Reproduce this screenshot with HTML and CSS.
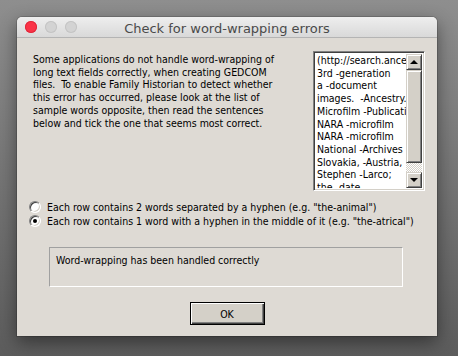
FILE: index.html
```html
<!DOCTYPE html>
<html lang="en">
<head>
  <meta charset="UTF-8">
  <title>Check for word-wrapping errors</title>
  <link rel="stylesheet" href="styles.css">
</head>
<body>
  <div class="window">
    <div class="titlebar">
      <div class="lights">
        <span class="light close"></span>
        <span class="light"></span>
        <span class="light"></span>
      </div>
      <div class="title">Check for word-wrapping errors</div>
      <div></div>
    </div>
    <div class="content">
      <div class="top">
        <p class="intro">Some applications do not handle word-wrapping of<br>long text fields correctly, when creating GEDCOM<br>files.&nbsp; To enable Family Historian to detect whether<br>this error has occurred, please look at the list of<br>sample words opposite, then read the sentences<br>below and tick the one that seems most correct.</p>
        <div class="listbox">
          <ul class="items">
            <li>(http://search.ancestry</li>
            <li>3rd -generation</li>
            <li>a -document</li>
            <li>images.&nbsp; -Ancestry.</li>
            <li>Microfilm -Publication</li>
            <li>NARA -microfilm</li>
            <li>NARA -microfilm</li>
            <li>National -Archives</li>
            <li>Slovakia, -Austria,</li>
            <li>Stephen -Larco;</li>
            <li>the -date</li>
          </ul>
          <div class="scrollbar">
            <div class="sb-btn"><span class="arrow up"></span></div>
            <div class="sb-thumb"></div>
            <div class="sb-track"></div>
            <div class="sb-btn"><span class="arrow down"></span></div>
          </div>
        </div>
      </div>
      <div class="options">
        <label class="option"><span class="radio"></span>Each row contains 2 words separated by a hyphen (e.g. "the-animal")</label>
        <label class="option"><span class="radio checked"></span>Each row contains 1 word with a hyphen in the middle of it (e.g. "the-atrical")</label>
      </div>
      <div class="status">Word-wrapping has been handled correctly</div>
      <div class="actions">
        <button class="ok">OK</button>
      </div>
    </div>
  </div>
</body>
</html>
```

FILE: styles.css
```css
html, body { margin: 0; height: 100%; }
body { background: linear-gradient(#8e8e8e, #5c5c5c); padding: 17px; box-sizing: border-box; font-family: "DejaVu Sans Condensed", "DejaVu Sans", sans-serif; }

.window { width: 420px; height: 319px; background: #dedad4; border-radius: 5px 5px 0 0; box-shadow: 0 6px 18px rgba(0, 0, 0, .45), 0 0 0 1px rgba(0, 0, 0, .15); overflow: hidden; }

.titlebar { height: 20px; display: grid; grid-template-columns: 1fr auto 1fr; align-items: center; background: linear-gradient(#eeeeee, #d9d9d9); border-bottom: 1px solid #b4b4b4; }
.lights { display: flex; gap: 8px; padding-left: 8px; }
.light { width: 12px; height: 12px; border-radius: 50%; background: #d3d3d3; box-shadow: inset 0 0 0 1px #c4c4c4; }
.light.close { background: #fa3347; box-shadow: inset 0 0 0 1px #e0283b; }
.title { font-family: "DejaVu Sans", sans-serif; font-size: 13px; color: #4a4a4a; padding-top: 2px; }

.content { font-size: 10.5px; color: #000; }
.top { display: flex; justify-content: space-between; padding: 13px 12px 0 16px; }
.intro { margin: 2px 0 0; line-height: 12.7px; }

.listbox { width: 112px; height: 140px; box-sizing: border-box; display: flex; background: #fff; border: 1px solid; border-color: #808080 #fff #fff #808080; box-shadow: inset 1px 1px 0 #404040, inset -1px -1px 0 #d4d0c8; padding: 2px; }
.items { list-style: none; margin: 0; padding: 0 0 0 1px; flex: 1; overflow: hidden; white-space: nowrap; line-height: 12.7px; }
.scrollbar { width: 16px; display: flex; flex-direction: column; }
.sb-btn { height: 16px; box-sizing: border-box; background: #d4d0c8; border: 1px solid; border-color: #d4d0c8 #404040 #404040 #d4d0c8; box-shadow: inset 1px 1px 0 #fff, inset -1px -1px 0 #808080; display: flex; align-items: center; justify-content: center; }
.arrow { width: 0; height: 0; border-left: 4px solid transparent; border-right: 4px solid transparent; }
.arrow.up { border-bottom: 4px solid #000; }
.arrow.down { border-top: 4px solid #000; }
.sb-thumb { height: 93px; box-sizing: border-box; background: #d4d0c8; border: 1px solid; border-color: #d4d0c8 #404040 #404040 #d4d0c8; box-shadow: inset 1px 1px 0 #fff, inset -1px -1px 0 #808080; }
.sb-track { flex: 1; background: repeating-conic-gradient(#fff 0 25%, #d4d0c8 0 50%) 0 0 / 2px 2px; }

.options { padding: 9px 0 0 12px; }
.option { display: flex; align-items: center; gap: 6px; height: 14px; }
.radio { width: 12px; height: 12px; box-sizing: border-box; border-radius: 50%; background: #fff; border: 1px solid; border-color: #808080 #fff #fff #808080; box-shadow: inset 1px 1px 0 #404040, inset -1px -1px 0 #d4d0c8; display: flex; align-items: center; justify-content: center; }
.radio.checked::after { content: ""; width: 4px; height: 4px; border-radius: 50%; background: #000; }

.status { margin: 19px 0 0 32px; width: 354px; height: 40px; box-sizing: border-box; border: 1px solid; border-color: #a0a0a0 #fff #fff #a0a0a0; padding: 6px 0 0 6px; }

.actions { display: flex; justify-content: center; padding-top: 15px; }
.ok { width: 75px; height: 23px; font: inherit; font-size: 10.5px; color: #000; background: #d4d0c8; border: 1px solid #000; box-shadow: inset 1px 1px 0 #fff, inset -1px -1px 0 #404040, inset -2px -2px 0 #808080; padding: 0; }
```
